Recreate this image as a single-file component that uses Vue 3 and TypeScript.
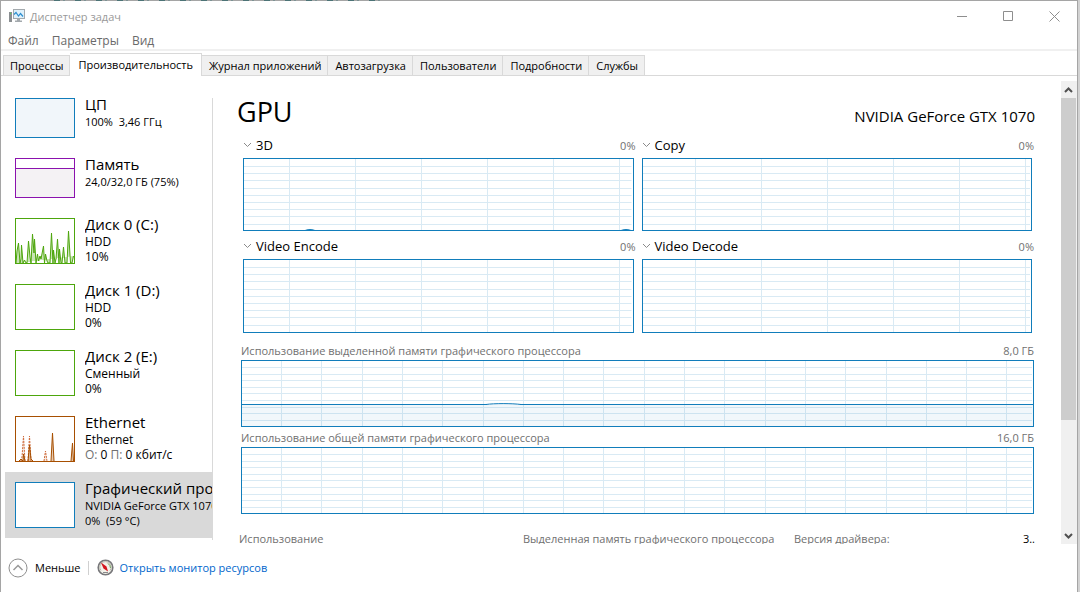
<script setup lang="ts">
import { ref } from 'vue'

interface Device {
  id: string
  title: string
  kind: 'cpu' | 'memory' | 'disk' | 'network' | 'gpu'
  lines: string[]
}

interface Engine {
  name: string
  load: string
  gridStart: number
  blips: number[]
}

const menus = ['Файл', 'Параметры', 'Вид']
const tabs = [
  'Процессы',
  'Производительность',
  'Журнал приложений',
  'Автозагрузка',
  'Пользователи',
  'Подробности',
  'Службы',
]
const activeTab = ref('Производительность')
const selected = ref('gpu')

const devices: Device[] = [
  { id: 'cpu', title: 'ЦП', kind: 'cpu', lines: ['100%  3,46 ГГц'] },
  { id: 'memory', title: 'Память', kind: 'memory', lines: ['24,0/32,0 ГБ (75%)'] },
  { id: 'disk0', title: 'Диск 0 (C:)', kind: 'disk', lines: ['HDD', '10%'] },
  { id: 'disk1', title: 'Диск 1 (D:)', kind: 'disk', lines: ['HDD', '0%'] },
  { id: 'disk2', title: 'Диск 2 (E:)', kind: 'disk', lines: ['Сменный', '0%'] },
  { id: 'ethernet', title: 'Ethernet', kind: 'network', lines: ['Ethernet'] },
  { id: 'gpu', title: 'Графический процессор 0', kind: 'gpu', lines: ['NVIDIA GeForce GTX 1070', '0%  (59 °C)'] },
]

const engines: Engine[] = [
  { name: '3D', load: '0%', gridStart: 45, blips: [66, 382] },
  { name: 'Copy', load: '0%', gridStart: 52, blips: [] },
  { name: 'Video Encode', load: '0%', gridStart: 45, blips: [] },
  { name: 'Video Decode', load: '0%', gridStart: 52, blips: [] },
]

const memoryCharts = [
  { name: 'Использование выделенной памяти графического процессора', max: '8,0 ГБ', used: true },
  { name: 'Использование общей памяти графического процессора', max: '16,0 ГБ', used: false },
]

const series = (start: number, step: number, count: number): number[] =>
  Array.from({ length: count }, (_, i) => Math.round(start + i * step) + 0.5)

const engineRows = series(7, 7.2, 9)
const memoryRows = series(6, 6.6, 9)
const memoryColumns = series(39, 40.3, 60)
</script>

<template>
  <div class="desktop">
    <div class="window">
      <div class="backdrop"></div>
      <header class="titlebar">
        <svg class="app-icon" width="16" height="16" viewBox="0 0 16 16" aria-hidden="true">
          <rect x="0" y="4" width="3" height="10" fill="#8b8f92" />
          <rect x="1" y="5" width="1" height="1" fill="#4be04b" />
          <rect x="4.500" y="1.500" width="11" height="9" fill="#dff1fb" stroke="#a3a9ad" />
          <path d="M5 6.500L7 4.500L9.500 8L11.500 5.500L14 8.500" fill="none" stroke="#2b8ed0" stroke-width="1.200" />
          <path d="M8 11h3v1.500h2V14H6v-1.500h2z" fill="#a3a9ad" />
        </svg>
        <span class="caption">Диспетчер задач</span>
        <div class="controls">
          <button type="button" aria-label="Свернуть">
            <svg width="11" height="11" viewBox="0 0 11 11"><path d="M0 5.500h10" /></svg>
          </button>
          <button type="button" aria-label="Развернуть">
            <svg width="11" height="11" viewBox="0 0 11 11"><path d="M.5.5h9v9h-9z" /></svg>
          </button>
          <button type="button" aria-label="Закрыть">
            <svg width="11" height="11" viewBox="0 0 11 11"><path d="M.5.5l10 10M10.500.5l-10 10" /></svg>
          </button>
        </div>
      </header>

      <nav class="menu">
        <button v-for="m in menus" :key="m" type="button">{{ m }}</button>
      </nav>

      <div class="tabs" role="tablist">
        <button
          v-for="t in tabs"
          :key="t"
          type="button"
          role="tab"
          :aria-selected="t === activeTab"
          :class="['tab', { active: t === activeTab }]"
          @click="activeTab = t"
        >{{ t }}</button>
      </div>

      <div class="body">
        <aside class="sidebar">
          <button
            v-for="d in devices"
            :key="d.id"
            type="button"
            :class="['device', d.kind, { selected: d.id === selected }]"
            @click="selected = d.id"
          >
            <span class="thumb">
              <svg v-if="d.id === 'memory'" width="58" height="38" viewBox="0 0 58 38">
                <rect x="0" y="9" width="58" height="29" fill="#f4f2f4" />
                <path d="M0 9.500h58" stroke="#8b12ae" />
              </svg>
              <svg v-else-if="d.id === 'disk0'" width="58" height="44" viewBox="0 0 58 44">
                <path
                  d="M0 44L1 32L2.500 24L4 44L5 40L5.500 26L7 44L8.500 41L10 44L11 44L12.500 22L14 38L15 44L16.500 15L18 34L18.500 20L20 44L21.500 35L22.500 42L24 37L25 40L27.500 27L28.500 44L29.500 35L31 42L32 44H34L35.500 14L37 44L37.500 31L39 44L40 40L41.500 20L43 44L43.500 30L45 44H46L47.500 28L49 44H51L52.500 12L54.500 44H56L57.500 37"
                  fill="#4da60c" fill-opacity=".3" stroke="#4da60c" stroke-width="1"
                />
              </svg>
              <svg v-else-if="d.id === 'ethernet'" width="58" height="44" viewBox="0 0 58 44">
                <path d="M5 44L6 40L7.500 19L9 44M12 44L13.500 19L15 44M28 44L29.500 34L31 44" fill="#a74f01" fill-opacity=".12" stroke="#d06a3a" stroke-dasharray="2 1" />
                <path d="M3 44L5 42L7 44L7.500 37L9 44M12 44L13.500 28L15 42L17 44M35 44L36.500 16L38 44M55 44L56.500 26L57.500 44" fill="#a74f01" fill-opacity=".3" stroke="#a74f01" />
              </svg>
            </span>
            <span class="info">
              <span class="name">{{ d.title }}</span>
              <span v-for="l in d.lines" :key="l" class="line">{{ l }}</span>
              <span v-if="d.kind === 'network'" class="line"><i>О:</i> 0 <i>П:</i> 0 кбит/с</span>
            </span>
          </button>
        </aside>

        <main class="details">
          <div class="heading">
            <h1>GPU</h1>
            <h2>NVIDIA GeForce GTX 1070</h2>
          </div>

          <div class="engines">
            <section v-for="e in engines" :key="e.name" class="engine">
              <div class="engine-head">
                <button type="button">
                  <svg width="9" height="6" viewBox="0 0 9 6"><path d="M1 1l3.500 3.500L8 1" /></svg>
                  {{ e.name }}
                </button>
                <span>{{ e.load }}</span>
              </div>
              <div class="chart">
                <svg class="grid">
                  <path v-for="x in series(e.gridStart, 66, 6)" :key="'x' + x" :d="`M${x} 0V72`" />
                  <line v-for="y in engineRows" :key="'y' + y" x1="0" x2="100%" :y1="y" :y2="y" />
                  <path v-for="b in e.blips" :key="b" class="trace" :d="`M${b - 5} 71Q${b} 69 ${b + 5} 71Z`" />
                </svg>
              </div>
            </section>
          </div>

          <section v-for="c in memoryCharts" :key="c.name" class="memory-chart">
            <div class="memory-head"><span>{{ c.name }}</span><span>{{ c.max }}</span></div>
            <div class="chart">
              <svg class="grid">
                <path v-for="x in memoryColumns" :key="'x' + x" :d="`M${x} 0V65`" />
                <line v-for="y in memoryRows" :key="'y' + y" x1="0" x2="100%" :y1="y" :y2="y" />
              </svg>
              <svg v-if="c.used" class="usage">
                <rect x="0" y="43" width="100%" height="22" />
                <line x1="0" x2="245" y1="43.500" y2="43.500" />
                <path d="M244 43.500C252 42.300 270 42.300 279 43.500" />
                <line x1="278" x2="100%" y1="43.500" y2="43.500" />
              </svg>
            </div>
          </section>

          <div class="stats">
            <span>Использование</span>
            <span>Выделенная память графического процессора</span>
            <span>Версия драйвера:</span>
            <b>3..</b>
          </div>
        </main>

        <div class="scrollbar">
          <button type="button" aria-label="Прокрутить вверх">
            <svg width="9" height="6" viewBox="0 0 9 6"><path d="M1 5l3.500-3.500L8 5" /></svg>
          </button>
          <div class="track"><div class="handle"></div></div>
          <button type="button" aria-label="Прокрутить вниз">
            <svg width="9" height="6" viewBox="0 0 9 6"><path d="M1 1l3.500 3.500L8 1" /></svg>
          </button>
        </div>
      </div>

      <footer class="footer">
        <button type="button">
          <svg width="20" height="20" viewBox="0 0 20 20" fill="none">
            <circle cx="10" cy="10" r="9" stroke="#8f8f8f" />
            <path d="M5.500 12L10 7.500L14.500 12" stroke="#9a9a9a" stroke-width="1.500" />
          </svg>
          Меньше
        </button>
        <span class="divider"></span>
        <a href="#">
          <svg width="17" height="17" viewBox="0 0 17 17" fill="none">
            <circle cx="8.500" cy="8.500" r="7.300" fill="#f3f1ea" stroke="#77777a" stroke-width="1.600" />
            <path d="M4 11.500A5.500 5.500 0 1 1 13 11.500" stroke="#b9bbb0" stroke-width="1" />
            <path d="M11 4.500A5.500 5.500 0 0 1 13.500 9" stroke="#6fa35a" stroke-width="1" />
            <path d="M4 3.500L6.500 9.500L11 12.500L9.500 7.500Z" fill="#d4141c" />
            <path d="M6 13.500h5" stroke="#8a8a8a" />
          </svg>
          Открыть монитор ресурсов
        </a>
      </footer>
    </div>
  </div>
</template>

<style>
html,
body {
  background: #fff;
}
</style>

<style scoped>
* {
  box-sizing: border-box;
}
.desktop {
  height: 100vh;
  padding-right: 2px;
  overflow: hidden;
  background: #d2d2d2;
  font: 12px/15px 'Open Sans', 'Noto Sans', sans-serif;
  color: #000;
}
button {
  margin: 0;
  padding: 0;
  border: 0;
  background: none;
  font: inherit;
  color: inherit;
  text-align: left;
}
svg {
  display: block;
  flex: none;
}
.window {
  position: relative;
  display: flex;
  flex-direction: column;
  height: 100%;
  border: solid #a5a5a5;
  border-width: 1px 1px 0;
  background: #fff;
}
.backdrop {
  position: absolute;
  top: -1px;
  left: 53px;
  width: 330px;
  height: 1px;
  background: repeating-linear-gradient(90deg, #4c7376 0 6px, #a5a5a5 6px 9px, #7c9294 9px 11px, #a5a5a5 11px 21px);
}
.titlebar {
  display: flex;
  align-items: center;
  height: 30px;
  padding-left: 8px;
  color: #999;
}
.caption {
  margin-left: 5px;
  font-size: 11px;
}
.controls {
  display: flex;
  margin-left: auto;
}
.controls button {
  display: flex;
  align-items: center;
  justify-content: center;
  width: 46px;
  height: 29px;
}
.controls path {
  fill: none;
  stroke: #8e8e8e;
}
.menu {
  display: flex;
  gap: 13px;
  height: 20px;
  padding: 2px 7px 0;
  border-bottom: 2px solid #f0f0f0;
  color: #6a6a6a;
}
.menu button {
  height: 15px;
}
.tabs {
  display: flex;
  align-items: flex-end;
  height: 25px;
  padding-left: 2px;
  border-bottom: 1px solid #d9d9d9;
  font-size: 11px;
}
.tab {
  height: 20px;
  padding: 0 6px 0 7px;
  border: 1px solid #d9d9d9;
  border-width: 1px 1px 0 0;
  background: #f0f0f0;
  white-space: nowrap;
}
.tab:first-child {
  padding: 0 6px;
  border-left-width: 1px;
}
.tab.active {
  height: 23px;
  margin-bottom: -1px;
  padding: 0 8px 2px;
  background: #fff;
}
.body {
  display: flex;
  flex: 1;
  min-height: 0;
  overflow: hidden;
}
.sidebar {
  position: relative;
  flex: none;
  width: 212px;
  padding: 12px 0 0 4px;
}
.sidebar::after {
  content: '';
  position: absolute;
  top: 22px;
  right: 0;
  bottom: 4px;
  width: 1px;
  background: #d9d9d9;
}
.device {
  display: flex;
  gap: 10px;
  width: 100%;
  padding: 10px 0 10px 10px;
}
.device.selected {
  background: #d9d9d9;
}
.thumb {
  flex: none;
  width: 60px;
  height: 46px;
  border: 1px solid #117dbb;
  background: #fff;
}
.cpu .thumb,
.memory .thumb {
  height: 40px;
}
.cpu .thumb {
  background: #f1f6fa;
}
.memory .thumb {
  border-color: #8b12ae;
}
.disk .thumb {
  border-color: #4da60c;
}
.network .thumb {
  border-color: #a74f01;
}
.info {
  display: flex;
  flex: 1;
  flex-direction: column;
  min-width: 0;
  height: 50px;
  margin: -4px 0 -6px;
  white-space: pre;
}
.cpu .info,
.memory .info {
  height: 46px;
}
.name {
  font-size: 15px;
  line-height: 20px;
  overflow: hidden;
}
.line {
  flex: none;
  line-height: 15px;
  overflow: hidden;
}
.cpu .line,
.memory .line,
.gpu .line {
  font-size: 11px;
}
.line i {
  font-style: normal;
  color: #707070;
}
.details {
  flex: 1;
  min-width: 0;
  padding: 14px 26px 0 24px;
}
.heading {
  display: flex;
  align-items: center;
  justify-content: space-between;
  height: 40px;
}
h1,
h2 {
  margin: 0;
  font-weight: 400;
}
h1 {
  padding-top: 3px;
  font-size: 27px;
  line-height: 40px;
}
h2 {
  padding-top: 12px;
  font-size: 15px;
  line-height: 20px;
}
.engines {
  display: grid;
  grid-template-columns: 1fr 1fr;
  column-gap: 6px;
  padding: 0 1px 0 6px;
}
.engine .chart {
  height: 73px;
  margin-right: 2px;
}
.engine:nth-child(n + 3) .chart {
  height: 74px;
}
.engine-head {
  display: flex;
  align-items: center;
  justify-content: space-between;
  height: 28px;
  padding-top: 2px;
}
.engine-head button {
  display: flex;
  align-items: center;
  gap: 4px;
  font-size: 13px;
}
.engine-head path {
  fill: none;
  stroke: #8a8a8a;
}
.engine-head span {
  font-size: 11px;
  color: #707070;
}
.chart {
  position: relative;
  border: 1px solid #117dbb;
}
.grid {
  width: calc(100% - 1px);
  height: 100%;
  stroke: #d9eaf4;
}
.trace {
  fill: #117dbb;
  stroke: none;
}
.usage {
  position: absolute;
  inset: 0;
  width: 100%;
  height: 100%;
  fill: none;
  stroke: #117dbb;
}
.usage rect {
  fill: rgba(17, 125, 187, 0.06);
  stroke: none;
}
.memory-chart {
  padding: 0 1px 0 4px;
}
.memory-chart .chart {
  height: 67px;
}
.memory-head {
  display: flex;
  align-items: center;
  justify-content: space-between;
  height: 20px;
  font-size: 11px;
  color: #707070;
}
.engines + .memory-chart {
  margin-top: 7px;
}
.stats {
  display: grid;
  grid-template-columns: minmax(0, 284fr) minmax(0, 271fr) minmax(0, 229fr) auto;
  padding: 17px 0 0 2px;
  font-size: 11px;
  color: #707070;
  white-space: nowrap;
}
.stats b {
  font-weight: 400;
  color: #000;
}
.scrollbar {
  display: flex;
  flex: none;
  flex-direction: column;
  width: 16px;
  margin-top: 5px;
  padding-right: 1px;
  background: #f0f0f0;
}
.scrollbar button {
  display: flex;
  align-items: center;
  justify-content: center;
  height: 17px;
}
.scrollbar path {
  fill: none;
  stroke: #505050;
  stroke-width: 2px;
}
.track {
  flex: 1;
}
.handle {
  height: 75%;
  background: #cdcdcd;
}
.footer {
  display: flex;
  align-items: center;
  height: 48px;
  padding: 0 0 1px 7px;
  font-size: 11px;
}
.footer button,
.footer a {
  display: flex;
  align-items: center;
  gap: 7px;
  text-decoration: none;
}
.footer a {
  gap: 5px;
  color: #0066cc;
}
.divider {
  width: 1px;
  height: 14px;
  margin: 0 8px;
  background: #d0d0d0;
}
</style>
